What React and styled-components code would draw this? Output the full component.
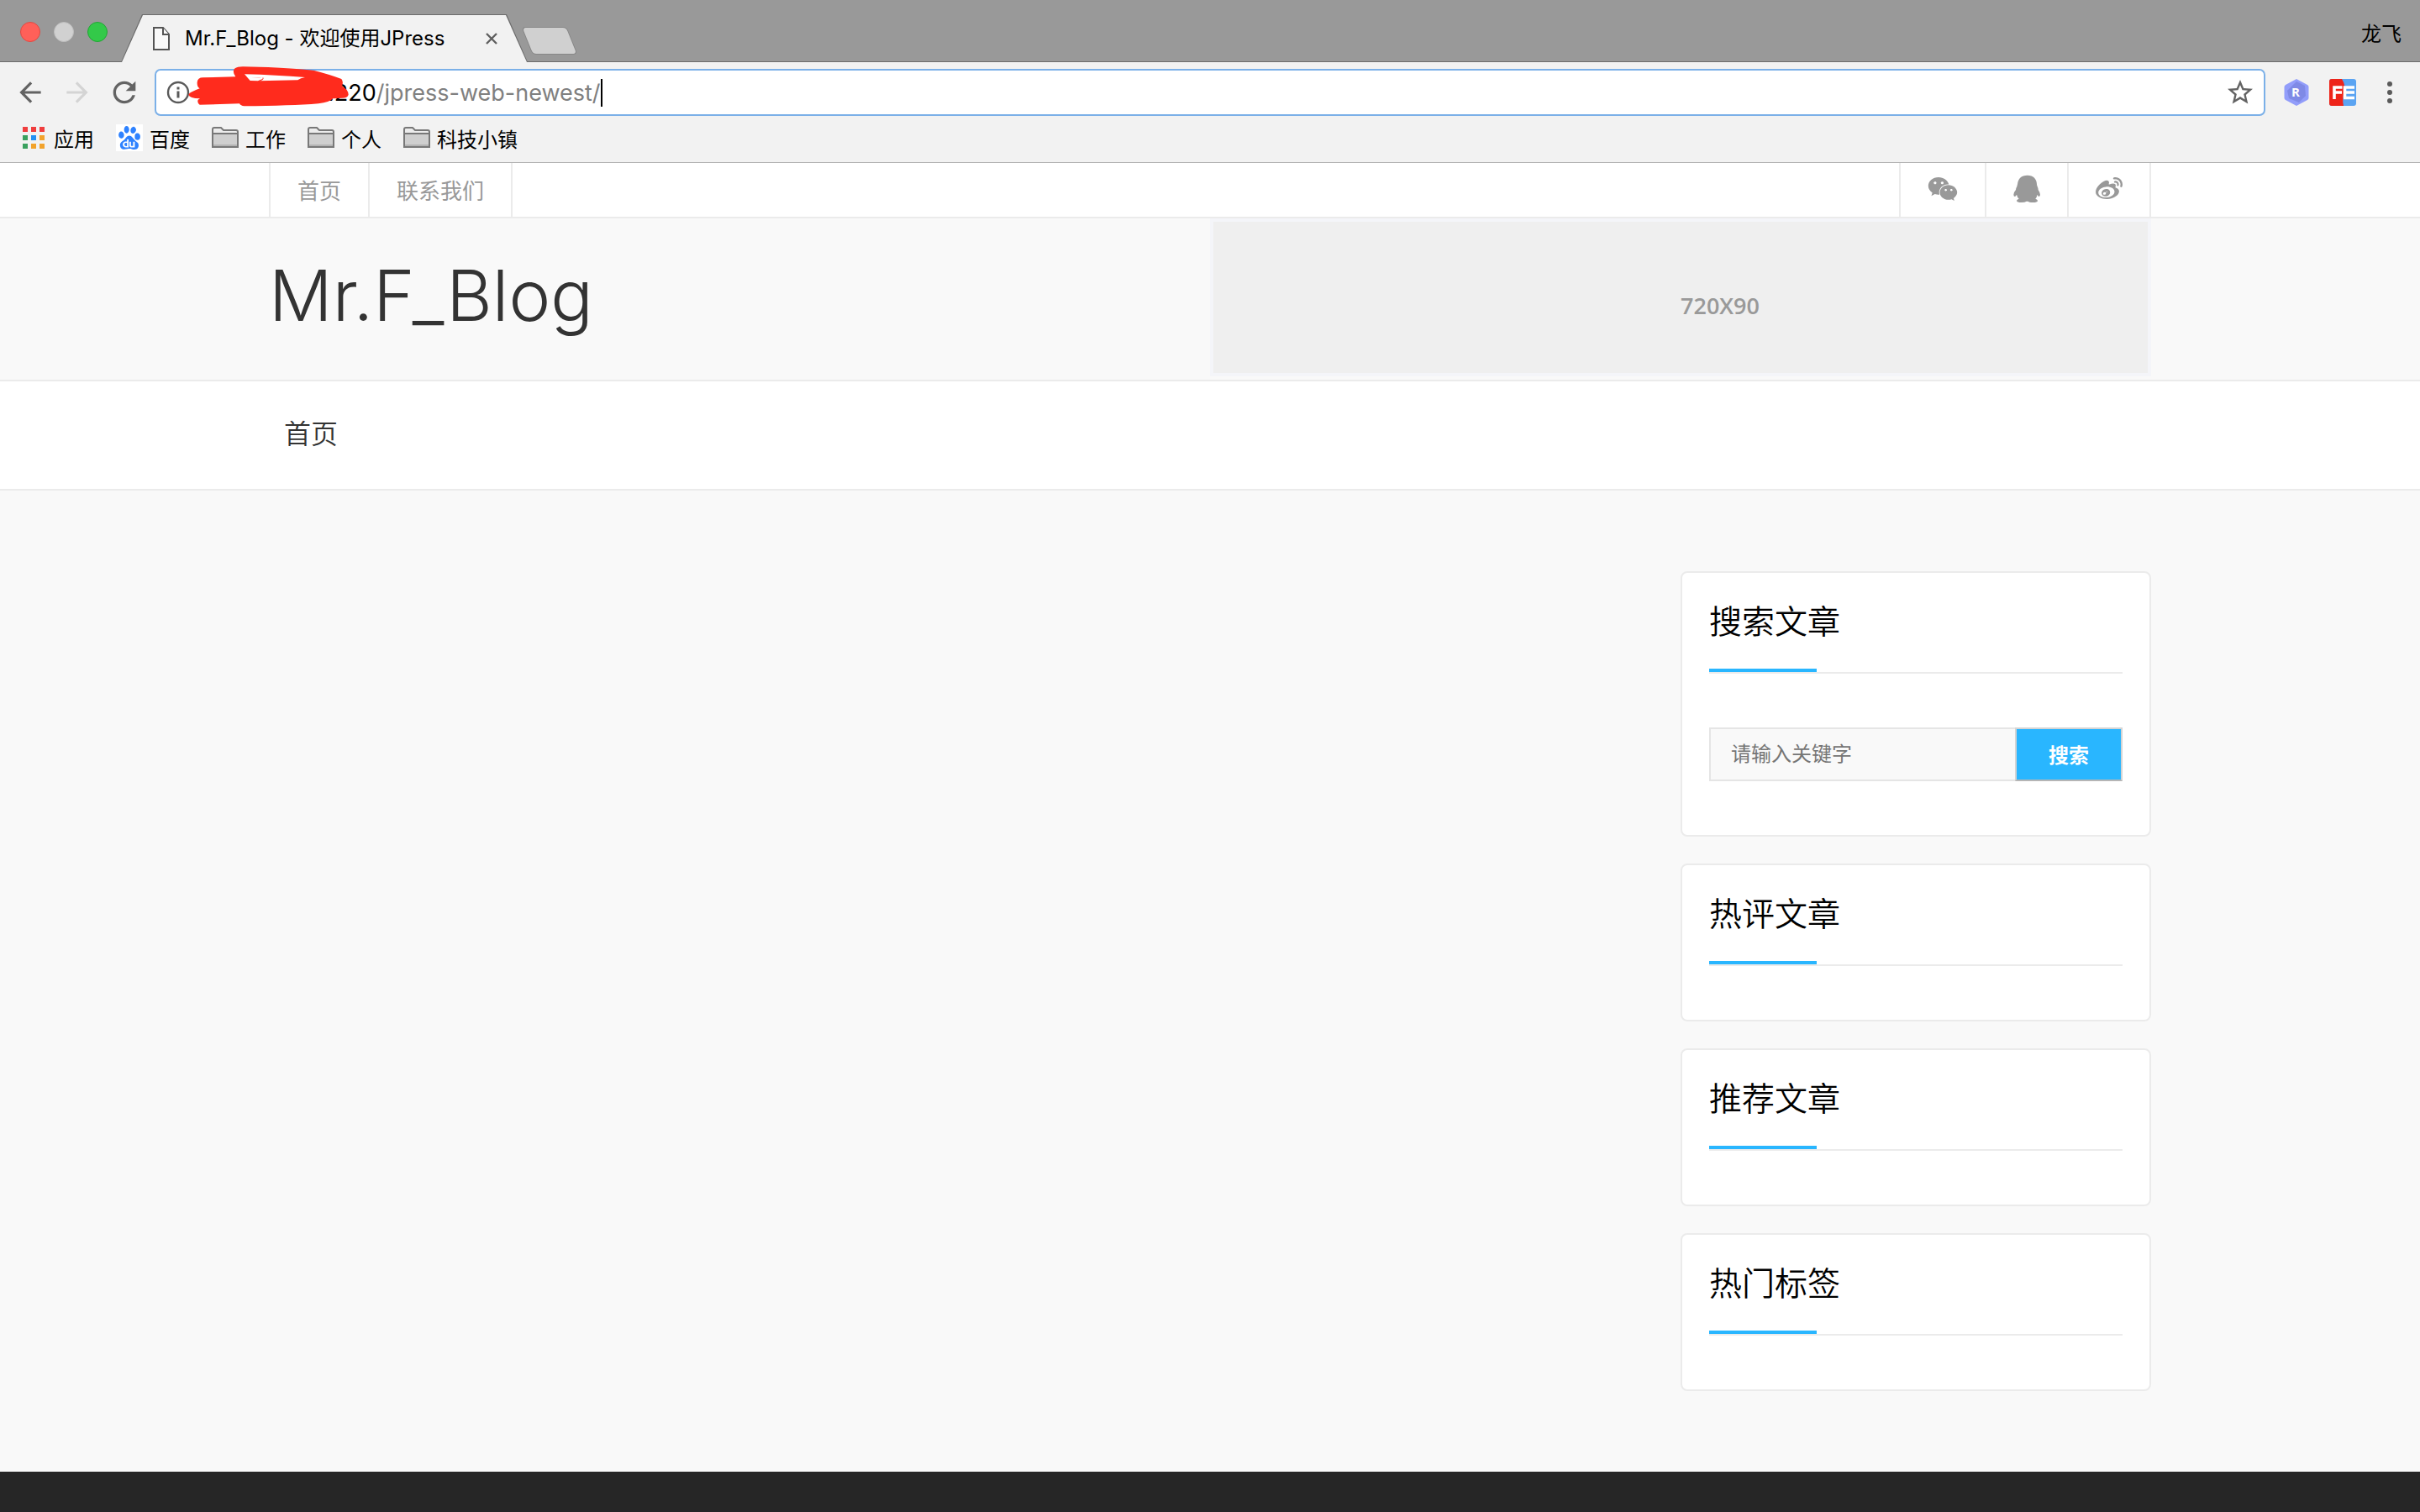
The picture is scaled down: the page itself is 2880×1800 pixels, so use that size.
import React from "react";
import styled, { createGlobalStyle } from "styled-components";
import { FaWeixin, FaWeibo } from "react-icons/fa";
import { MdArrowBack, MdArrowForward, MdRefresh, MdStarBorder } from "react-icons/md";
import { SiBaidu } from "react-icons/si";

const GlobalStyle = createGlobalStyle`
  *, *::before, *::after { box-sizing: border-box; }
  body {
    margin: 0;
    background: #f9f9f9;
    color: #000;
    font-family: Inter, "Noto Sans CJK SC", sans-serif;
    font-size: 24px;
  }
  a { color: inherit; text-decoration: none; }
  button { border: 0; padding: 0; background: none; color: inherit; font: inherit; }
  svg { display: block; flex: none; }
`;

const Page = styled.div`
  display: flex;
  flex-direction: column;
  min-height: 100vh;
`;

/* Browser window */

const TabStrip = styled.header`
  display: flex;
  align-items: flex-end;
  height: 74px;
  padding-right: 22px;
  background: #999;
  border-bottom: 1px solid #6b6b6b;
`;

const WindowButtons = styled.div`
  display: flex;
  gap: 16px;
  padding: 0 16px 23px 24px;
`;

const WindowButton = styled.button`
  width: 24px;
  height: 24px;
  border-radius: 50%;
  border: 1px solid ${(p) => p.$edge};
  background: ${(p) => p.$fill};
`;

const Tab = styled.div`
  position: relative;
  display: flex;
  align-items: center;
  gap: 18px;
  width: 484px;
  height: 57px;
  margin-bottom: -1px;
  padding: 0 36px 0 38px;
  isolation: isolate;

  &::before, &::after {
    content: "";
    position: absolute;
    inset: 0;
    z-index: -1;
    background: #6b6b6b;
    clip-path: polygon(0 100%, 25px 0, calc(100% - 25px) 0, 100% 100%);
  }
  &::after {
    inset: 1px 1px 0;
    background: #f2f2f2;
  }
`;

const TabTitle = styled.span`
  flex: 1;
  white-space: nowrap;
  line-height: 32px;
`;

const NewTab = styled.button`
  width: 52px;
  height: 31px;
  margin-bottom: 9px;
  border-radius: 4px;
  background: #d0d0d0;
  box-shadow: 0 0 0 1px #878787;
  transform: skewX(22deg);
`;

const Profile = styled.span`
  margin-left: auto;
  padding-bottom: 16px;
  line-height: 32px;
`;

const Toolbar = styled.div`
  display: flex;
  align-items: center;
  gap: 22px;
  height: 72px;
  padding: 0 20px 0 22px;
  background: #f2f2f2;
`;

const ToolGroup = styled.div`
  display: flex;
  align-items: center;
  gap: ${(p) => p.$gap}px;
`;

const ToolButton = styled.button`
  display: flex;
  align-items: center;
  justify-content: center;
  width: ${(p) => p.$width}px;
  height: 32px;
  color: ${(p) => (p.$muted ? "#d4d4d4" : "#636363")};
`;

const Omnibox = styled.div`
  position: relative;
  display: flex;
  flex: 1;
  align-items: center;
  height: 56px;
  padding: 0 12px;
  border: 2px solid #7bb0e8;
  border-radius: 7px;
  background: #fff;
  font-size: 27px;
`;

const Host = styled.label`
  padding-left: 164px;
`;

const UrlInput = styled.input`
  field-sizing: content;
  border: 0;
  padding: 0;
  outline: 0;
  background: none;
  color: #808080;
  font: inherit;
`;

const Caret = styled.i`
  width: 2px;
  height: 33px;
  background: #000;
`;

const Scribble = styled.svg`
  position: absolute;
  left: 38px;
  top: -6px;
`;

const StarButton = styled(ToolButton)`
  margin-left: auto;
`;

const Bookmarks = styled.nav`
  display: flex;
  gap: 26px;
  height: 48px;
  padding: 2px 24px 0;
  background: #f2f2f2;
  border-bottom: 1px solid #b2b2b2;
`;

const Bookmark = styled.a`
  display: flex;
  align-items: center;
  gap: 8px;
  height: 32px;
`;

const SiteIcon = styled.span`
  display: grid;
  place-items: center;
  width: 32px;
  height: 32px;
  background: #fff;
  color: #2e82ff;
`;

/* Blog */

const Container = styled.div`
  display: flex;
  justify-content: space-between;
  width: 100%;
  max-width: 2240px;
  margin: 0 auto;
`;

const Band = styled.section`
  background: ${(p) => p.$bg};
  border-bottom: 2px solid #ebebeb;
`;

const LinkList = styled.nav`
  display: flex;
  border-left: 2px solid #ebebeb;
`;

const TopLink = styled.a`
  display: flex;
  align-items: center;
  height: 64px;
  padding: 0 32px 2px;
  border-right: 2px solid #ebebeb;
  color: #999;
  font-size: 26px;
`;

const BlogName = styled.h1`
  margin: 0;
  color: #333;
  font-size: 84px;
  font-weight: 300;
  line-height: 184px;
`;

const Banner = styled.a`
  width: 50%;
  height: 188px;
  margin-bottom: 4px;
  padding: 14px 0 0 calc(25% - 4px);
  border: 4px solid #f4f5f9;
  background: #efefef;
  color: #999;
  font: 600 27px/172px "Open Sans", sans-serif;
`;

const MenuLink = styled.a`
  padding: 0 18px 2px;
  color: #333;
  font-size: 32px;
  font-weight: 350;
  line-height: 126px;
`;

const Content = styled(Container)`
  flex-direction: column;
  align-items: flex-end;
  gap: 32px;
  padding: 96px 0;
`;

const Card = styled.section`
  width: 560px;
  padding: 0 32px 64px;
  border: 2px solid #ebebeb;
  border-radius: 8px;
  background: #fff;
`;

const CardTitle = styled.h2`
  position: relative;
  margin: 0;
  padding-bottom: 2px;
  border-bottom: 2px solid #ebebeb;
  font-size: 39px;
  font-weight: 350;
  line-height: 116px;

  &::after {
    content: "";
    position: absolute;
    left: 0;
    bottom: 0;
    width: 128px;
    height: 4px;
    background: #29b6ff;
  }
`;

const SearchForm = styled.form`
  display: flex;
  height: 64px;
  margin-top: 64px;
`;

const SearchInput = styled.input`
  flex: 1;
  min-width: 0;
  padding: 0 24px 2px;
  border: 2px solid #e5e5e5;
  border-right: 0;
  border-radius: 0;
  background: #f9f9f9;
  font: inherit;
  &::placeholder { color: #757575; }
`;

const SearchButton = styled.button`
  width: 128px;
  padding-bottom: 2px;
  border: 2px solid #d4d4d4;
  border-bottom-color: #b5b5b5;
  background: #29b6ff;
  color: #fff;
  font-weight: 700;
`;

const Footer = styled.footer`
  flex: 1;
  min-height: 48px;
  background: #262626;
`;

const FileIcon = () => (
  <svg width="20" height="28" viewBox="0 0 20 28" fill="#fafafa" stroke="#555" strokeWidth="2">
    <path d="M1 1h11l7 8v18H1z" />
    <path d="M12 1v8h7" />
  </svg>
);

const CloseIcon = () => (
  <svg width="14" height="14" viewBox="0 0 14 14" stroke="#5f5f5f" strokeWidth="2.4">
    <path d="M1 1l12 12M13 1L1 13" />
  </svg>
);

const InfoIcon = () => (
  <svg width="28" height="28" viewBox="0 0 28 28" fill="#5a5a5a">
    <circle cx="14" cy="14" r="12" fill="none" stroke="#5a5a5a" strokeWidth="2.4" />
    <path d="M12.5 7.5h3v3h-3zM12.5 12.5h3v8h-3z" />
  </svg>
);

const appColors = ["#f03e3e", "#f03e3e", "#f03e3e", "#3aa15f", "#2491f3", "#f2a32c", "#3aa15f", "#f2a32c", "#f2a32c"];

const AppsIcon = () => (
  <svg width="32" height="32" viewBox="0 0 32 32">
    {appColors.map((c, i) => (
      <rect key={i} x={3 + (i % 3) * 10} y={3 + Math.floor(i / 3) * 10} width="6" height="6" fill={c} />
    ))}
  </svg>
);

const FolderIcon = () => (
  <svg width="32" height="26" viewBox="0 0 32 26" stroke="#787878" strokeWidth="2">
    <path d="M1 24V3q0-2 2-2h8l3 3h15q2 0 2 2v18z" fill="#ececec" />
    <path d="M1 8h30v15q0 1-1 1H2q-1 0-1-1z" fill="#cfcfcf" />
    <path d="M2 22h28" stroke="#b4b4b4" />
  </svg>
);

const HexIcon = () => (
  <svg width="30" height="32" viewBox="0 0 30 32">
    <path d="M15 0l13 7q1.500.8 1.500 2.500v13q0 1.500-1.500 2.500l-13 7-13-7Q.5 24 .5 22.500v-13Q.5 8 2 7z" fill="#929dfa" />
    <path d="M15 3l10 5 1 12-8 8-12-5-2-9z" fill="#7f8ae6" />
    <text x="14" y="21" textAnchor="middle" fill="#fff" fontFamily="Open Sans, sans-serif" fontSize="15" fontWeight="700">R</text>
  </svg>
);

const FeIcon = () => (
  <svg width="32" height="32" viewBox="0 0 32 32">
    <rect width="32" height="32" rx="3" fill="#5ba4f2" />
    <path d="M3 0h12q5 8 3 16-3 8-1 16H3q-3 0-3-3V3q0-3 3-3z" fill="#ee2419" />
    <path d="M6 10h9.500M6 16h9M6 8.200V24M18.500 8.200V22.500M17 10h13M18 16h12M17 22.500h13" stroke="#fff" strokeWidth="3.600" fill="none" />
  </svg>
);

const MoreIcon = () => (
  <svg width="32" height="32" viewBox="0 0 32 32" fill="#5a5a5a">
    <circle cx="16" cy="6" r="3" />
    <circle cx="16" cy="16" r="3" />
    <circle cx="16" cy="26" r="3" />
  </svg>
);

const QqIcon = () => (
  <svg width="32" height="34" viewBox="0 0 96 102" fill="currentColor">
    <path d="M50 2C72 2 84 16 84 34Q84 38 86 42Q89 48 89 54Q96 64 96 72Q95 78 91 78Q88 76 86 71Q84 80 79 86Q87 88 87 93Q86 99 70 99Q56 99 52 95H47Q42 99 29 99Q13 99 12 93Q12 88 20 86Q14 80 12 71Q9 76 6 78Q1 78 1 71Q2 62 9 54Q9 48 13 42Q14 38 15 34C17 14 29 2 50 2Z" />
  </svg>
);

const folders = ["工作", "个人", "科技小镇"];
const emptyCards = ["热评文章", "推荐文章", "热门标签"];

export default function App() {
  return (
    <Page>
      <GlobalStyle />
      <TabStrip>
        <WindowButtons>
          <WindowButton aria-label="关闭" $fill="#ff6059" $edge="#e14942" />
          <WindowButton aria-label="最小化" $fill="#d1d1d1" $edge="#bdbdbd" />
          <WindowButton aria-label="缩放" $fill="#33c949" $edge="#22a635" />
        </WindowButtons>
        <Tab>
          <FileIcon />
          <TabTitle>Mr.F_Blog - 欢迎使用JPress</TabTitle>
          <button aria-label="关闭标签页"><CloseIcon /></button>
        </Tab>
        <NewTab aria-label="新标签页" />
        <Profile>龙飞</Profile>
      </TabStrip>

      <Toolbar>
        <ToolGroup $gap={28}>
          <ToolButton $width={28} aria-label="后退"><MdArrowBack size={38} /></ToolButton>
          <ToolButton $width={28} $muted aria-label="前进"><MdArrowForward size={38} /></ToolButton>
          <ToolButton $width={28} aria-label="刷新"><MdRefresh size={40} /></ToolButton>
        </ToolGroup>
        <Omnibox>
          <InfoIcon />
          <Host htmlFor="url">.220</Host>
          <UrlInput id="url" defaultValue="/jpress-web-newest/" />
          <Caret />
          <StarButton $width={32} aria-label="收藏"><MdStarBorder size={36} /></StarButton>
          <Scribble width="192" height="50" viewBox="135 24 576 150" aria-hidden="true">
            <path
              fill="#ff2b1d"
              fillRule="evenodd"
              d="M136 128Q138 120 176 106Q166 100 167 84Q168 67 188 67L304 64Q290 44 302 34Q310 28 330 28L420 30Q540 36 585 42Q640 56 682 72Q690 82 684 98Q706 108 707 128Q704 140 685 140L652 142Q640 155 600 160Q500 168 335 169Q322 168 318 160L176 164Q166 158 170 146L177 142Q138 140 136 128ZM336 55L356 78L384 79L400 72L402 67L360 67Q400 64 404 68Q404 76 390 79L526 76Q536 68 552 66Q450 58 336 55Z"
            />
          </Scribble>
        </Omnibox>
        <ToolGroup $gap={24}>
          <ToolButton $width={30} aria-label="R"><HexIcon /></ToolButton>
          <ToolButton $width={32} aria-label="FE"><FeIcon /></ToolButton>
          <ToolButton $width={32} aria-label="菜单"><MoreIcon /></ToolButton>
        </ToolGroup>
      </Toolbar>

      <Bookmarks>
        <Bookmark href="#apps"><AppsIcon />应用</Bookmark>
        <Bookmark href="#baidu"><SiteIcon><SiBaidu size={28} /></SiteIcon>百度</Bookmark>
        {folders.map((name) => (
          <Bookmark key={name} href="#folder"><FolderIcon />{name}</Bookmark>
        ))}
      </Bookmarks>

      <Band $bg="#fff">
        <Container>
          <LinkList>
            <TopLink href="#home">首页</TopLink>
            <TopLink href="#contact">联系我们</TopLink>
          </LinkList>
          <LinkList>
            <TopLink href="#weixin" aria-label="微信"><FaWeixin size={36} /></TopLink>
            <TopLink href="#qq" aria-label="QQ"><QqIcon /></TopLink>
            <TopLink href="#weibo" aria-label="微博"><FaWeibo size={32} /></TopLink>
          </LinkList>
        </Container>
      </Band>
      <Band $bg="#f9f9f9">
        <Container>
          <BlogName>Mr.F_Blog</BlogName>
          <Banner href="#ad">720X90</Banner>
        </Container>
      </Band>
      <Band $bg="#fff">
        <Container as="nav">
          <MenuLink href="#home">首页</MenuLink>
        </Container>
      </Band>

      <Content as="main">
        <Card>
          <CardTitle>搜索文章</CardTitle>
          <SearchForm>
            <SearchInput aria-label="搜索文章" placeholder="请输入关键字" />
            <SearchButton type="button">搜索</SearchButton>
          </SearchForm>
        </Card>
        {emptyCards.map((title) => (
          <Card key={title}><CardTitle>{title}</CardTitle></Card>
        ))}
      </Content>
      <Footer />
    </Page>
  );
}
